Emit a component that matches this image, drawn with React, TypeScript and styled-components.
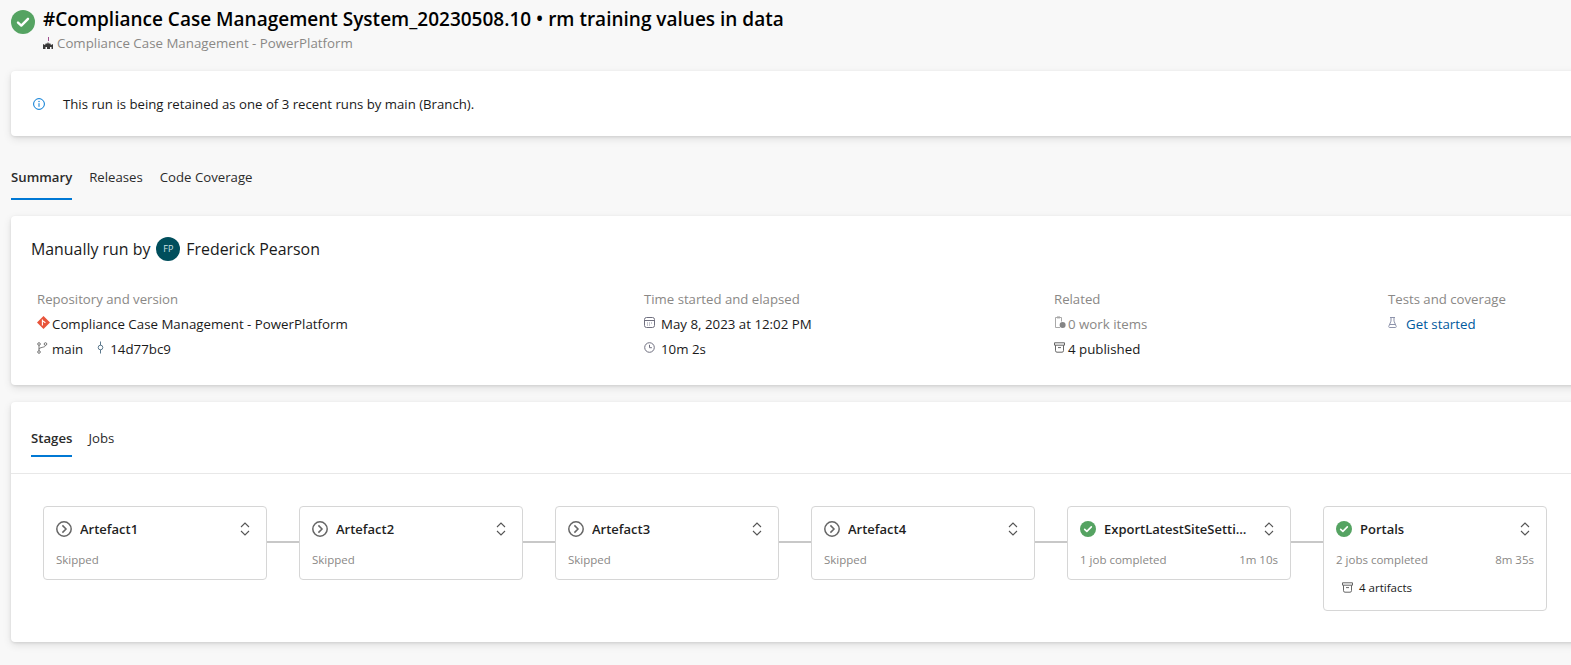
import React from 'react';
import styled, { createGlobalStyle } from 'styled-components';

const GlobalStyle = createGlobalStyle`
  html, body {
    margin: 0;
    padding: 0;
    height: 100%;
    overflow: hidden;
    background: #f8f8f8;
    font-family: "Open Sans", "Noto Sans", sans-serif;
    color: #1a1a1a;
  }
`;

// Layout
const Page = styled.div`
  width: 1571px;
  height: 665px;
  padding-left: 11px;
  box-sizing: border-box;
  overflow: hidden;
  display: flex;
  flex-direction: column;
`;

const Header = styled.header`
  display: flex;
  gap: 8px;
  height: 71px;
  padding-top: 5px;
  box-sizing: border-box;
`;

const HeaderIcon = styled.div`
  padding-top: 5px;
`;

const Title = styled.h1`
  margin: 0;
  font-size: 19px;
  line-height: 28px;
  font-weight: 600;
  color: #000;
  white-space: nowrap;
`;

const SubTitle = styled.div`
  display: flex;
  align-items: center;
  gap: 3px;
  font-size: 13.3px;
  line-height: 20px;
  color: #8a8886;
`;

const Card = styled.section<{ $height: number }>`
  background: #fff;
  height: ${(p) => p.$height}px;
  margin-right: -8px;
  border-radius: 4px;
  box-shadow: 0 1px 3px rgba(0, 0, 0, 0.1), 0 3px 8px rgba(0, 0, 0, 0.1);
  box-sizing: border-box;
`;

const Notice = styled(Card)`
  display: flex;
  align-items: center;
  gap: 18px;
  padding: 1px 0 0 22px;
  font-size: 13.2px;
  color: #1a1a1a;
`;

const PageTabs = styled.nav`
  display: flex;
  gap: 17px;
  height: 64px;
  padding-top: 16px;
  margin-bottom: 16px;
  box-sizing: border-box;
`;

const Tab = styled.div<{ $active?: boolean; $pad: number }>`
  display: flex;
  align-items: flex-end;
  height: 48px;
  padding-bottom: ${(p) => p.$pad}px;
  box-sizing: border-box;
  font-size: 13.2px;
  line-height: 18px;
  font-weight: ${(p) => (p.$active ? 600 : 400)};
  color: #2b2b2b;
  border-bottom: 2px solid ${(p) => (p.$active ? '#0078d4' : 'transparent')};
`;

const SummaryCard = styled(Card)`
  margin-bottom: 17px;
  padding: 20px 0 0 20px;
`;

const RunBy = styled.div`
  display: flex;
  align-items: center;
  height: 25px;
  font-size: 15.9px;
  color: #1a1a1a;
`;

const Avatar = styled.div`
  width: 24px;
  height: 24px;
  margin: 0 6px;
  border-radius: 50%;
  background: #004e5c;
  color: #cfe3e6;
  font-size: 9px;
  display: flex;
  align-items: center;
  justify-content: center;
`;

const MetaGrid = styled.div`
  display: grid;
  grid-template-columns: 607px 410px 334px 1fr;
  margin: 26px 0 0 6px;
`;

const MetaColumn = styled.div`
  display: flex;
  flex-direction: column;
`;

const MetaLabel = styled.div`
  font-size: 13.2px;
  line-height: 24px;
  color: #8a8886;
`;

const MetaRow = styled.div<{ $gap?: number }>`
  display: flex;
  align-items: center;
  gap: ${(p) => p.$gap ?? 2}px;
  height: 25px;
  font-size: 13.3px;
  color: #1a1a1a;
`;

const Muted = styled.span`
  color: #8a8886;
`;

const Link = styled.span`
  color: #005a9e;
`;

const Chunk = styled.span<{ $gap: number }>`
  display: inline-flex;
  align-items: center;
  gap: ${(p) => p.$gap}px;
  margin-right: 14px;
`;

const InnerTabs = styled.nav`
  display: flex;
  gap: 16px;
  height: 72px;
  padding: 7px 0 0 20px;
  border-bottom: 1px solid #e8e8e8;
  box-sizing: border-box;
`;

const StageRow = styled.div`
  display: flex;
  align-items: flex-start;
  padding: 32px 0 0 32px;
`;

const StageCard = styled.div`
  width: 224px;
  flex: none;
  box-sizing: border-box;
  padding: 12px 12px 0 12px;
  min-height: 74px;
  border: 1px solid #d6d6d6;
  border-radius: 4px;
  background: #fff;
`;

const StageHead = styled.div`
  display: flex;
  align-items: center;
  gap: 8px;
  height: 20px;
`;

const StageName = styled.div`
  flex: 1;
  min-width: 0;
  margin-right: 5px;
  font-size: 13px;
  font-weight: 600;
  color: #1f1f1f;
  white-space: nowrap;
  overflow: hidden;
  text-overflow: ellipsis;
`;

const StageInfo = styled.div`
  display: flex;
  justify-content: space-between;
  margin-top: 13px;
  font-size: 11.5px;
  line-height: 16px;
  color: #8a8886;
`;

const StageArtifacts = styled.div`
  display: flex;
  align-items: center;
  gap: 6px;
  margin: 12px 0 14px 6px;
  font-size: 11.5px;
  line-height: 16px;
  color: #1a1a1a;
`;

const Connector = styled.div`
  width: 32px;
  height: 2px;
  flex: none;
  margin-top: 35px;
  background: #c8c8c8;
`;

// Icons
const SuccessIcon = ({ size }: { size: number }) => (
  <svg width={size} height={size} viewBox="0 0 24 24" style={{ flex: 'none' }}>
    <circle cx="12" cy="12" r="12" fill="#55a362" />
    <path d="M7 12.6l3.3 3L17 8.8" fill="none" stroke="#fff" strokeWidth="2.4" strokeLinecap="round" strokeLinejoin="round" />
  </svg>
);

const SkippedIcon = () => (
  <svg width="16" height="16" viewBox="0 0 16 16" style={{ flex: 'none' }}>
    <circle cx="8" cy="8" r="7.2" fill="none" stroke="#666" strokeWidth="1.5" />
    <path d="M6.4 4.4L10 8l-3.6 3.6" fill="none" stroke="#666" strokeWidth="1.5" />
  </svg>
);

const Expand = () => (
  <svg width="10" height="14" viewBox="0 0 10 14" style={{ flex: 'none', marginRight: 4 }}>
    <path d="M1 5l4-4 4 4M1 9l4 4 4-4" fill="none" stroke="#555" strokeWidth="1.1" />
  </svg>
);

const Factory = () => (
  <svg width="11" height="12" viewBox="0 0 11 12" style={{ flex: 'none' }}>
    <path d="M5 0h1v4H5z" fill="#a04f8f" />
    <path d="M0 12V7l2 1 1-2 1 1 1-2 1 2 1-1 1 2 2-1v5H8.5v-2H7v2H4v-2H2.5v2z" fill="#3a3a3a" />
  </svg>
);

const Info = () => (
  <svg width="12" height="12" viewBox="0 0 12 12" style={{ flex: 'none' }}>
    <circle cx="6" cy="6" r="5.4" fill="none" stroke="#0078d4" strokeWidth="1" />
    <path d="M6 5.2v3.6" stroke="#0078d4" strokeWidth="1" />
    <circle cx="6" cy="3.5" r="0.7" fill="#0078d4" />
  </svg>
);

const GitRepo = () => (
  <svg width="13" height="13" viewBox="0 0 13 13" style={{ flex: 'none', marginTop: -3 }}>
    <path d="M6.5 0L13 6.5 6.5 13 0 6.5z" fill="#e8543a" />
    <path d="M5.4 3.4v6.2M5.4 4.6l3 2.2" stroke="#fff" strokeWidth="1.1" fill="none" />
  </svg>
);

const Branch = () => (
  <svg width="11" height="12" viewBox="0 0 11 12" style={{ flex: 'none', marginTop: -2 }}>
    <g fill="none" stroke="#666" strokeWidth="0.9">
      <circle cx="2" cy="2" r="1.3" />
      <circle cx="2" cy="10" r="1.3" />
      <circle cx="8.5" cy="2" r="1.3" />
      <path d="M2 3.3v5.4M8.5 3.3c0 2.5-6.5 1.7-6.5 4" />
    </g>
  </svg>
);

const Commit = () => (
  <svg width="7" height="13" viewBox="0 0 7 13" style={{ flex: 'none', marginTop: -3 }}>
    <g fill="none" stroke="#4a6a80" strokeWidth="0.9">
      <circle cx="3.5" cy="6.5" r="2.3" />
      <path d="M3.5 0.5v3.7M3.5 8.8v3.7" />
    </g>
  </svg>
);

const Calendar = () => (
  <svg width="11" height="11" viewBox="0 0 11 11" style={{ flex: 'none', marginTop: -2 }}>
    <rect x="0.5" y="0.5" width="10" height="10" rx="2" fill="none" stroke="#6f6f7f" />
    <path d="M1 3.5h9" stroke="#6f6f7f" />
    <path d="M3 6h1M5 6h1M7 6h1M3 8h1M5 8h1" stroke="#8f8f9f" />
  </svg>
);

const Clock = () => (
  <svg width="11" height="11" viewBox="0 0 11 11" style={{ flex: 'none', marginTop: -2 }}>
    <circle cx="5.5" cy="5.5" r="4.8" fill="none" stroke="#6f6f7f" />
    <path d="M5.5 2.8v2.9h2.4" fill="none" stroke="#6f6f7f" />
  </svg>
);

const WorkItems = () => (
  <svg width="12" height="13" viewBox="0 0 12 13" style={{ flex: 'none', marginTop: -2 }}>
    <path d="M6 11.5H1.5V1.5h6v4" fill="none" stroke="#a9a9a9" />
    <rect x="3" y="0.4" width="3" height="2" fill="#a9a9a9" />
    <circle cx="8.6" cy="9" r="3" fill="#858585" />
  </svg>
);

const Artifact = () => (
  <svg width="11" height="11" viewBox="0 0 11 11" style={{ flex: 'none', marginTop: -2 }}>
    <path d="M0.5 0.8h10v2.4h-10zM1.5 3.2v5.5a1.5 1.5 0 0 0 1.5 1.5h5a1.5 1.5 0 0 0 1.5-1.5V3.2M4 5.6h3" fill="none" stroke="#666" />
  </svg>
);

const Flask = () => (
  <svg width="9" height="11" viewBox="0 0 9 11" style={{ flex: 'none', marginTop: -3 }}>
    <path d="M2 0.5h5M3 0.5v3.6L0.8 9.3a.8.8 0 0 0 .7 1.2h6a.8.8 0 0 0 .7-1.2L6 4.1V0.5M2 7.5h5" fill="none" stroke="#8d93ab" />
  </svg>
);

interface Stage {
  name: string;
  info: string;
  time?: string;
  ok?: boolean;
  artifacts?: string;
}

const stages: Stage[] = [
  { name: 'Artefact1', info: 'Skipped' },
  { name: 'Artefact2', info: 'Skipped' },
  { name: 'Artefact3', info: 'Skipped' },
  { name: 'Artefact4', info: 'Skipped' },
  { name: 'ExportLatestSiteSettings', info: '1 job completed', time: '1m 10s', ok: true },
  { name: 'Portals', info: '2 jobs completed', time: '8m 35s', ok: true, artifacts: '4 artifacts' },
];

export default function App() {
  return (
    <Page>
      <GlobalStyle />
      <Header>
        <HeaderIcon>
          <SuccessIcon size={24} />
        </HeaderIcon>
        <div>
          <Title>#Compliance Case Management System_20230508.10 • rm training values in data</Title>
          <SubTitle>
            <Factory />
            Compliance Case Management - PowerPlatform
          </SubTitle>
        </div>
      </Header>

      <Notice $height={65}>
        <Info />
        This run is being retained as one of 3 recent runs by main (Branch).
      </Notice>

      <PageTabs>
        <Tab $active $pad={12}>Summary</Tab>
        <Tab $pad={12}>Releases</Tab>
        <Tab $pad={12}>Code Coverage</Tab>
      </PageTabs>

      <SummaryCard $height={169}>
        <RunBy>
          Manually run by
          <Avatar>FP</Avatar>
          Frederick Pearson
        </RunBy>
        <MetaGrid>
          <MetaColumn>
            <MetaLabel>Repository and version</MetaLabel>
            <MetaRow>
              <GitRepo />
              Compliance Case Management - PowerPlatform
            </MetaRow>
            <MetaRow $gap={0}>
              <Chunk $gap={4}><Branch />main</Chunk>
              <Chunk $gap={6}><Commit />14d77bc9</Chunk>
            </MetaRow>
          </MetaColumn>
          <MetaColumn>
            <MetaLabel>Time started and elapsed</MetaLabel>
            <MetaRow $gap={6}><Calendar />May 8, 2023 at 12:02 PM</MetaRow>
            <MetaRow $gap={6}><Clock />10m 2s</MetaRow>
          </MetaColumn>
          <MetaColumn>
            <MetaLabel>Related</MetaLabel>
            <MetaRow $gap={2}><WorkItems /><Muted>0 work items</Muted></MetaRow>
            <MetaRow $gap={3}><Artifact />4 published</MetaRow>
          </MetaColumn>
          <MetaColumn>
            <MetaLabel>Tests and coverage</MetaLabel>
            <MetaRow $gap={9}><Flask /><Link>Get started</Link></MetaRow>
          </MetaColumn>
        </MetaGrid>
      </SummaryCard>

      <Card $height={240}>
        <InnerTabs>
          <Tab $active $pad={8}>Stages</Tab>
          <Tab $pad={8}>Jobs</Tab>
        </InnerTabs>
        <StageRow>
          {stages.map((s, i) => (
            <React.Fragment key={s.name}>
              {i > 0 && <Connector />}
              <StageCard>
                <StageHead>
                  {s.ok ? <SuccessIcon size={16} /> : <SkippedIcon />}
                  <StageName>{s.name}</StageName>
                  <Expand />
                </StageHead>
                <StageInfo>
                  <span>{s.info}</span>
                  {s.time && <span>{s.time}</span>}
                </StageInfo>
                {s.artifacts && (
                  <StageArtifacts>
                    <Artifact />
                    {s.artifacts}
                  </StageArtifacts>
                )}
              </StageCard>
            </React.Fragment>
          ))}
        </StageRow>
      </Card>
    </Page>
  );
}
